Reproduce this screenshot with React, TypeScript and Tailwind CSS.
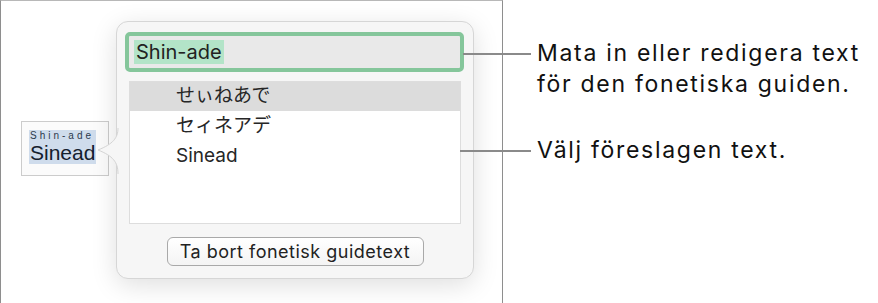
import React from "react";

const sans = { fontFamily: 'Inter, "Noto Sans CJK JP", sans-serif' };

function Tail() {
  return (
    <svg
      className="absolute left-[-20px] top-[106px]"
      width="22"
      height="46"
      viewBox="0 0 22 46"
    >
      <path
        d="M21 0 C21 10 16 16 1 22 C16 28 21 34 21 46 Z"
        fill="#f6f6f6"
      />
      <path
        d="M21 0 C21 10 16 16 1 22 C16 28 21 34 21 46"
        fill="none"
        stroke="#d4d4d4"
        strokeWidth="1"
      />
    </svg>
  );
}

export default function App() {
  return (
    <div
      className="w-[878px] h-[303px] bg-white overflow-hidden flex"
      style={sans}
    >
      <div className="w-[503px] h-[320px] shrink-0 border-l border-r border-t border-l-[#8e8e8e] border-r-[#8e8e8e] border-t-[#b8b8b8] flex items-start">
        <div className="ml-[20px] mt-[120px] w-[88px] h-[55px] border border-[#cccccc] bg-[#fbfbfb] flex items-start pl-[7px] pt-[8px]">
          <div className="bg-[#cfdcec] flex flex-col items-start px-[1px]">
            <span
              className="text-[10px] leading-[12px] tracking-[3px] text-[#2b3a4c]"
              style={{ fontFamily: '"Liberation Sans", Arial, sans-serif' }}
            >
              Shin-ade
            </span>
            <span
              className="text-[21px] leading-[22px] text-[#14202e]"
              style={{ fontFamily: '"Liberation Sans", Arial, sans-serif' }}
            >
              Sinead
            </span>
          </div>
        </div>
        <div className="relative ml-[7px] mt-[20px] w-[358px] h-[258px] rounded-[12px] bg-[#f6f6f6] border border-[#d6d6d6] shadow-[0_6px_26px_rgba(0,0,0,0.13)] flex flex-col items-start">
          <Tail />
          <div className="ml-[8px] mt-[10px] w-[339px] h-[40px] rounded-[5px] border-[4px] border-[#85c69b] bg-[#e9e9e9] flex items-center pl-[5px]">
            <span className="bg-[#b3e4c8] text-[20px] leading-[24px] text-[#222] px-[2px]">
              Shin-ade
            </span>
          </div>
          <div className="ml-[12px] mt-[9px] w-[332px] h-[143px] border border-[#dddddd] bg-white flex flex-col">
            <div className="h-[29px] bg-[#dcdcdc] pl-[46px] flex items-center text-[19px] text-[#262626]">
              せぃねあで
            </div>
            <div className="h-[30px] pl-[46px] flex items-center text-[19px] text-[#262626]">
              セィネアデ
            </div>
            <div className="h-[30px] pl-[46px] flex items-center text-[19px] text-[#262626]">
              Sinead
            </div>
          </div>
          <div className="self-center mt-[13px] w-[257px] h-[29px] rounded-[6px] border border-[#a9a9a9] bg-gradient-to-b from-white to-[#f4f4f4] flex items-center justify-center text-[18px] tracking-[0.5px] text-[#222]">
            Ta bort fonetisk guidetext
          </div>
        </div>
      </div>
      <div className="relative z-10 ml-[-43px] flex flex-col items-start">
        <div className="mt-[38px] ml-[3px] flex items-start">
          <div className="mt-[15px] w-[68px] h-[2px] bg-[#8a8a8a]" />
          <div className="ml-[6px] text-[23px] leading-[31px] tracking-[1.7px] text-[#111]">
            <div>Mata in eller redigera text</div>
            <div>för den fonetiska guiden.</div>
          </div>
        </div>
        <div className="mt-[35px] flex items-start">
          <div className="mt-[15px] w-[71px] h-[2px] bg-[#8a8a8a]" />
          <div className="ml-[6px] text-[23px] leading-[31px] tracking-[1.7px] text-[#111]">
            Välj föreslagen text.
          </div>
        </div>
      </div>
    </div>
  );
}
